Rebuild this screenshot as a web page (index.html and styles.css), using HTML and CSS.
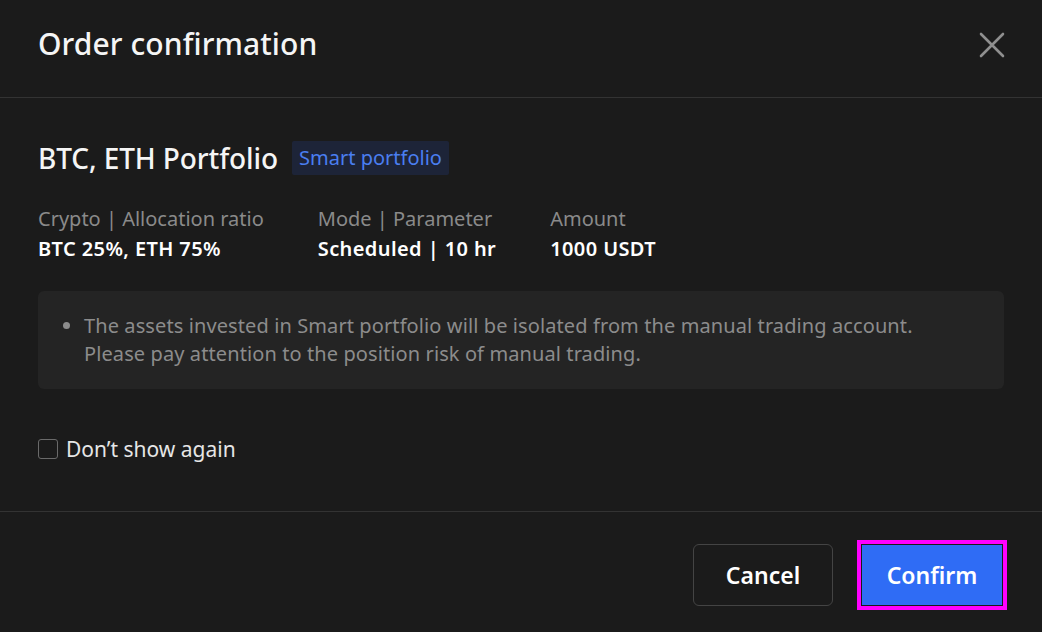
FILE: index.html
```html
<!DOCTYPE html>
<html lang="en">
<head>
<meta charset="utf-8">
<title>Order confirmation</title>
<link rel="stylesheet" href="styles.css">
</head>
<body>
<div class="dialog">
  <header class="head">
    <h1 class="title">Order confirmation</h1>
    <button class="close" aria-label="Close">
      <svg width="28" height="28" viewBox="0 0 28 28"><path d="M3 3L25 25M25 3L3 25" stroke="#8f8f8f" stroke-width="2.6" stroke-linecap="round"/></svg>
    </button>
  </header>
  <section class="content">
    <div class="name-row">
      <h2 class="name">BTC, ETH Portfolio</h2>
      <span class="badge">Smart portfolio</span>
    </div>
    <div class="stats">
      <div class="stat">
        <div class="label">Crypto | Allocation ratio</div>
        <div class="value">BTC 25%, ETH 75%</div>
      </div>
      <div class="stat">
        <div class="label">Mode | Parameter</div>
        <div class="value">Scheduled | 10 hr</div>
      </div>
      <div class="stat">
        <div class="label">Amount</div>
        <div class="value">1000 USDT</div>
      </div>
    </div>
    <ul class="notice">
      <li>The assets invested in Smart portfolio will be isolated from the manual trading account.<br>Please pay attention to the position risk of manual trading.</li>
    </ul>
    <label class="check">
      <span class="box"></span>
      <span class="check-text">Don’t show again</span>
    </label>
  </section>
  <footer class="foot">
    <button class="btn cancel">Cancel</button>
    <button class="btn confirm">Confirm</button>
  </footer>
</div>
</body>
</html>
```
FILE: styles.css
```css
* { box-sizing: border-box; }
html, body {
  margin: 0;
  padding: 0;
  background: #1b1b1b;
}
body {
  font-family: "Noto Sans", "Open Sans", sans-serif;
  color: #fff;
  width: 1042px;
  height: 632px;
  overflow: hidden;
}
.dialog {
  display: flex;
  flex-direction: column;
  height: 632px;
}
.head {
  height: 98px;
  border-bottom: 1px solid #333;
  display: flex;
  align-items: center;
  justify-content: space-between;
  padding: 0 38px 10px 38px;
}
.title {
  margin: 0;
  font-size: 30px;
  font-weight: 500;
  color: #f5f5f5;
  letter-spacing: 0.1px;
}
.close {
  background: none;
  border: 0;
  padding: 0;
  width: 28px;
  height: 28px;
  display: flex;
  margin-right: -2px;
  margin-top: 2px;
}
.content {
  padding: 43px 38px 0 38px;
  height: 414px;
  border-bottom: 1px solid #333;
}
.name-row {
  display: flex;
  align-items: center;
  gap: 14px;
  height: 34px;
}
.name {
  margin: 0;
  font-size: 28px;
  line-height: 34px;
  font-weight: 500;
  color: #f5f5f5;
  letter-spacing: -0.1px;
}
.badge {
  background: #1d2438;
  color: #4a7ef0;
  font-size: 20px;
  line-height: 34px;
  height: 34px;
  padding: 0 7px;
  border-radius: 2px;
}
.stats {
  display: flex;
  gap: 54px;
  margin-top: 28px;
}
.label {
  font-size: 20px;
  line-height: 31px;
  color: #8a8a8a;
}
.value {
  font-size: 20px;
  line-height: 30px;
  font-weight: 600;
  letter-spacing: 0.4px;
  color: #fff;
}
.notice {
  margin: 27px 0 0 0;
  background: #242424;
  border-radius: 6px;
  padding: 21px 20px 21px 46px;
  list-style: disc;
  color: #8c8c8c;
  font-size: 20px;
  line-height: 28px;
  letter-spacing: 0.1px;
}
.notice li::marker { color: #8c8c8c; }
.check {
  display: flex;
  align-items: center;
  gap: 8px;
  margin-top: 47px;
}
.box {
  width: 20px;
  height: 20px;
  border: 1.5px solid #6a6a6a;
  border-radius: 3px;
}
.check-text {
  font-size: 21px;
  line-height: 26px;
  color: #e6e6e6;
}
.foot {
  flex: 1;
  display: flex;
  justify-content: flex-end;
  align-items: flex-start;
  gap: 29px;
  padding: 32px 40px 0 0;
}
.btn {
  font-family: "Noto Sans", "Open Sans", sans-serif;
  width: 140px;
  height: 62px;
  border-radius: 6px;
  font-size: 23px;
  font-weight: 600;
  color: #fff;
  cursor: pointer;
}
.cancel {
  background: transparent;
  border: 1px solid #444;
}
.confirm {
  background: #2f6cf5;
  border: 0;
  border-radius: 0;
  height: 60px;
  margin-top: 1px;
  outline: 4px solid #ff00ff;
  outline-offset: 1px;
}
```
